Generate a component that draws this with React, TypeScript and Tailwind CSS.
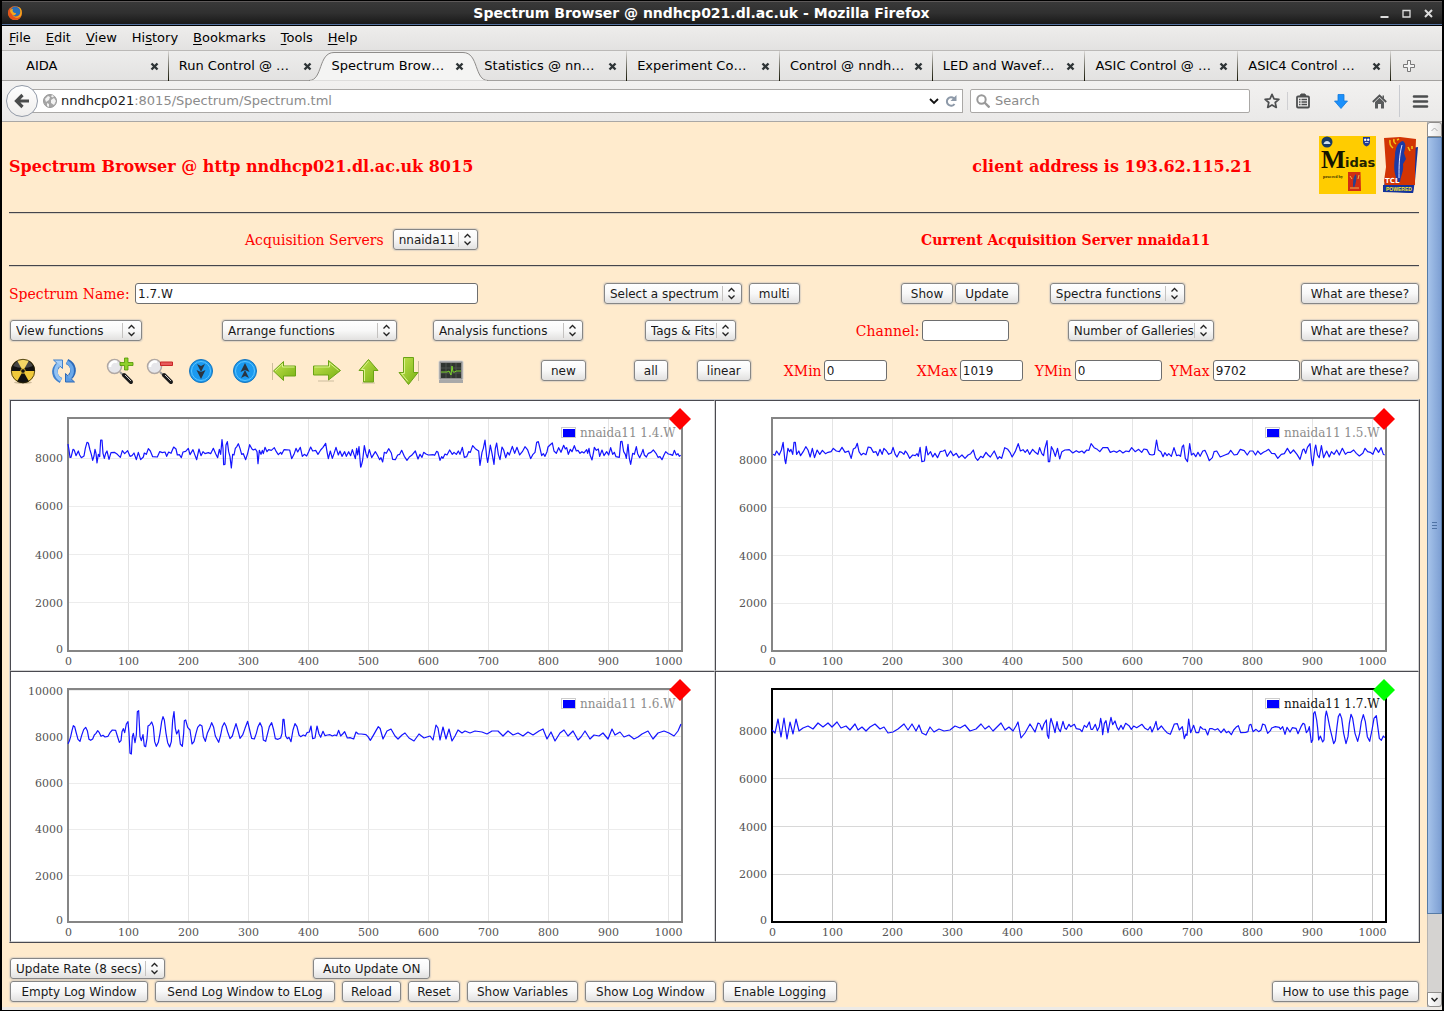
import React from "react";

/* ---------- form controls ---------- */

const shell =
  "h-[21px] rounded-[3px] border border-[#868686] bg-linear-to-b from-white via-[#f8f8f8] to-[#e2e1e0] font-['DejaVu_Sans',sans-serif] text-xs leading-4 text-[#1a1a1a] shadow-[0_0_1px_1px_rgba(150,160,180,0.3)]";

function Btn({ children, width = "px-[9px]" }: { children: React.ReactNode; width?: string }) {
  return <button className={`${shell} shrink-0 whitespace-nowrap ${width}`}>{children}</button>;
}

function Pick({ label, width, id }: { label: string; width: string; id?: string }) {
  return (
    <span className={`relative inline-block h-[21px] shrink-0 ${width}`}>
      <select id={id} aria-label={id ? undefined : label} className={`${shell} block w-full appearance-none pl-[5px]`}>
        <option>{label}</option>
      </select>
      <svg className="pointer-events-none absolute top-0 right-0" width="21" height="21" viewBox="0 0 21 21" fill="none">
        <path d="M1.5 3v15" stroke="#c4c2c0" />
        <path d="M7.5 8.5l3-3 3 3M7.5 12.5l3 3 3-3" stroke="#222" strokeWidth="1.3" />
      </svg>
    </span>
  );
}

function Field({ id, label, value, width, labelWidth }: { id: string; label: string; value: string; width: string; labelWidth: string }) {
  return (
    <div className="flex items-center">
      <label htmlFor={id} className={`shrink-0 whitespace-nowrap ${labelWidth}`}>{label}</label>
      <input
        id={id}
        defaultValue={value}
        className={`h-[21px] rounded-[3px] border border-[#6e6e6e] bg-white pl-[2px] font-['DejaVu_Sans',sans-serif] text-xs text-[#1a1a1a] ${width}`}
      />
    </div>
  );
}

/* ---------- toolbar icons ---------- */

function Zoomer({ plus }: { plus: boolean }) {
  return (
    <svg width="28" height="28" viewBox="0 0 28 28" fill="none">
      <path d="M14 15l4 4" stroke="#999" strokeWidth="2" />
      <path d="M18 18l7 7" stroke="#1c1c1c" strokeWidth="4" strokeLinecap="round" />
      <path d="M19 18l6 6" stroke="#c8c8c8" strokeWidth="1" />
      <circle cx="8.500" cy="9.500" r="7" fill="#e6e6ea" stroke="#b0a8a4" strokeWidth="1.500" />
      <path d="M4 10a5 5 0 0 1 7-5" stroke="#fff" strokeWidth="2.500" />
      {plus ? (
        <path d="M18.500 1h3.500v4.500h5v3h-5V13h-3.500V8.500H14v-3h4.500z" fill="#8fd02a" stroke="#4f9403" strokeWidth=".8" />
      ) : (
        <path d="M14.500 5h12v3.500h-12z" fill="#e65a5a" stroke="#c92626" />
      )}
    </svg>
  );
}

function Disc({ up }: { up: boolean }) {
  return (
    <svg width="28" height="28" viewBox="0 0 28 28">
      <circle cx="14" cy="14" r="11.500" fill="#1b9af0" stroke="#1675bd" />
      <circle cx="14" cy="14" r="9.500" fill="none" stroke="#5cc4ff" />
      <g transform={up ? "rotate(180 14 14)" : undefined} fill="#2b3440">
        <path d="M10 7l4 2 4-2-4 8z" />
        <path d="M9.500 13l4.500 2 4.500-2L14 22z" />
      </g>
    </svg>
  );
}

const arrowArt = { fill: "url(#leaf)", stroke: "#6aa316", strokeLinejoin: "round" as const };

const icons: { name: string; art: React.ReactNode }[] = [
  {
    name: "Radiation",
    art: (
      <svg width="28" height="28" viewBox="0 0 28 28">
        <ellipse cx="14" cy="25.500" rx="9" ry="1.500" fill="#cdbb9c" />
        <circle cx="14" cy="14" r="12" fill="#f0c93a" />
        <g fill="#111">
          <path d="M14 14H2A12 12 0 0 1 8 3.600z" />
          <path d="M14 14h12a12 12 0 0 0-6-10.400z" />
          <path d="M14 14L8 24.400a12 12 0 0 0 12 0z" />
        </g>
        <path d="M4 9A11 11 0 0 1 24 9Q14 13 4 9z" fill="#fff" opacity=".22" />
        <circle cx="14" cy="14" r="11.700" fill="none" stroke="#2a2308" strokeWidth=".8" />
        <circle cx="14" cy="14" r="2.300" fill="#111" stroke="#f0c93a" strokeWidth=".8" />
      </svg>
    ),
  },
  {
    name: "Refresh",
    art: (
      <svg width="28" height="28" viewBox="0 0 28 28" strokeLinejoin="round">
        <g id="half-turn">
          <path d="M8 8C3 13 4 20 11 23.500" fill="none" stroke="#3f7fcb" strokeWidth="5.500" />
          <path d="M3.500 3h9v8.500z" fill="#a9d0f7" stroke="#3f7fcb" />
          <path d="M9 7C4 12 5 19.500 11 23" fill="none" stroke="#93c3f4" strokeWidth="3.500" />
        </g>
        <g transform="rotate(180 14 14)">
          <path d="M8 8C3 13 4 20 11 23.500" fill="none" stroke="#2c69b8" strokeWidth="5.500" />
          <path d="M3.500 3h9v8.500z" fill="#5b9be2" stroke="#2c69b8" />
          <path d="M9 7C4 12 5 19.500 11 23" fill="none" stroke="#6aa8ea" strokeWidth="3.500" />
        </g>
      </svg>
    ),
  },
  { name: "Zoom in", art: <Zoomer plus /> },
  { name: "Zoom out", art: <Zoomer plus={false} /> },
  { name: "Page down", art: <Disc up={false} /> },
  { name: "Page up", art: <Disc up /> },
  {
    name: "Left",
    art: (
      <svg width="28" height="28" viewBox="0 0 28 28">
        <path d="M1.500 6v17" stroke="#cdbd9f" />
        <path d="M2.500 14L12.500 4.500V9h12v10h-12v4.500z" {...arrowArt} />
        <path d="M4 14l7.500-7.200V10h12" fill="none" stroke="#dcf28e" />
      </svg>
    ),
  },
  {
    name: "Right",
    art: (
      <svg width="30" height="28" viewBox="0 0 30 28">
        <path d="M6 24h16" stroke="#cdbd9f" />
        <path d="M1.500 9h15V3.500L28.500 13.500l-12 9.500v-5h-15z" {...arrowArt} />
        <path d="M2.500 10h15V6l9 7.500" fill="none" stroke="#dcf28e" />
      </svg>
    ),
  },
  {
    name: "Up",
    art: (
      <svg width="28" height="28" viewBox="0 0 28 28">
        <path d="M7 26h13" stroke="#cdbd9f" />
        <path d="M13.500 2.500L23 13.500h-4.500v11.500h-10V13.500H4z" {...arrowArt} />
        <path d="M9.500 24V12.500H6.500l7-8.300" fill="none" stroke="#dcf28e" />
      </svg>
    ),
  },
  {
    name: "Down",
    art: (
      <svg width="28" height="30" viewBox="0 0 28 30">
        <path d="M22.500 5v20" stroke="#cdbd9f" />
        <path d="M7.500 1.500h10v15H22L12.500 28.500 3 16.500h4.500z" {...arrowArt} />
        <path d="M8.500 2.500v15H5.500l6.500 8" fill="none" stroke="#dcf28e" />
      </svg>
    ),
  },
  {
    name: "Monitor",
    art: (
      <svg width="26" height="26" viewBox="0 0 26 26">
        <rect x="1" y="3" width="24" height="19" rx="1" fill="#8d8d8d" stroke="#d2d2d2" />
        <rect x="3" y="5" width="20" height="15" fill="#303530" />
        <path d="M3 10h20M3 15h20M8 5v15M13 5v15M18 5v15" stroke="#4c524c" />
        <path d="M3 14h6l2-1 2 4 1-9 1 6h2l1-1h5" fill="none" stroke="#7bd32c" />
        <path d="M1 22h24v3H1z" fill="#a9a9a9" />
      </svg>
    ),
  },
];

/* ---------- spectra ---------- */

type Chart = {
  name: string;
  ox: number;
  oy: number;
  width: number;
  active: boolean;
  step: number;
  ticks: number[];
  traces: { place: string; points: string }[];
};

const w14a =
  "204,147 207,165 210,187 213,187 219,163 223,166 228,182 235,168 239,180 244,188 252,183 256,160 261,142 265,144 270,165 274,178 278,196 282,183 285,163 288,175 291,204 295,178 299,185 302,135 306,135 309,175 313,190 317,175 321,168 327,193 333,173 343,172 352,178 361,187 367,167 374,176 383,167 390,184 396,182 402,174 409,194 415,172 422,194 430,186 433,174 439,178 445,161 451,168 458,185 472,186 479,170 487,173 495,171 500,184 506,171 513,175 521,156 528,162 532,180 538,179 544,188 549,171 557,169 565,160 570,179 574,172 579,164 584,178 590,194 597,162 603,182 609,170 615,176 625,173 632,176 640,160 647,176 653,188 658,163 662,178 666,134 669,160 671,209 675,208 678,150 682,140 686,170 690,185 694,219 698,178 702,180 706,160 711,154 715,146 720,160 725,178 730,176 737,194 743,175 749,149 756,162 760,165 766,162 771,170 774,206 778,166 783,178 787,166 790,176 795,157 801,170 806,164 814,166 823,158 829,170 835,179 842,172 845,178 852,164 869,165 875,191 882,178 888,160 893,171 901,157 907,184 913,178 920,183 926,170 932,156 938,168 947,166 954,178 962,165 969,157 977,145 981,170 985,191 991,168 997,190 1002,176 1008,157 1015,180 1020,168 1026,184 1034,170 1039,184 1046,170 1052,182 1057,164 1062,179 1066,191 1070,160 1073,180 1077,155 1082,217";
const w14b =
  "32,217 35,208 38,195 43,152 48,176 52,188 58,164 65,188 71,178 76,170 82,180 89,194 93,188 98,201 103,172 109,175 116,161 124,174 128,193 136,194 143,180 149,178 155,166 163,184 171,196 178,186 185,181 196,168 204,192 210,178 216,187 221,172 228,177 235,180 250,179 254,181 260,169 264,172 270,196 275,185 279,190 285,177 291,180 299,165 307,178 312,172 319,178 325,168 330,178 337,157 343,187 350,185 356,170 361,172 368,152 376,161 386,168 390,211 396,172 400,160 405,135 410,185 413,202 418,172 421,150 426,175 432,208 436,160 440,144 445,178 450,194 456,156 461,165 467,188 473,172 478,180 487,154 494,175 501,157 509,180 517,170 525,155 533,165 542,191 549,178 555,172 560,142 565,140 570,160 575,182 580,176 585,184 591,170 594,156 600,150 607,144 612,168 619,175 626,158 633,172 641,151 646,162 650,158 655,178 661,163 666,170 673,152 679,168 684,166 690,175 696,170 702,174 710,164 713,175 717,160 720,180 726,195 730,175 733,157 739,166 745,162 749,184 756,165 762,182 770,170 776,180 782,158 788,178 793,172 798,185 808,187 812,140 816,139 821,170 826,178 829,190 834,148 838,190 842,208 848,175 853,178 859,155 863,176 869,188 875,175 879,163 883,180 889,186 895,175 903,172 910,165 918,175 924,187 930,185 936,194 942,180 947,170 955,177 961,178 968,181 973,166 979,180 984,176 988,184 992,181";
const w15 =
  "30,178 34,181 38,168 44,180 49,165 53,142 57,195 59,206 64,160 68,170 71,163 75,178 78,142 81,142 84,178 89,168 93,182 99,170 105,155 110,165 115,186 120,160 125,188 131,165 137,178 143,166 150,176 156,172 163,170 168,160 175,168 182,170 188,157 195,172 203,168 209,190 214,162 219,158 223,145 227,170 232,180 237,175 243,179 248,156 254,158 260,172 266,170 270,182 275,163 280,178 284,160 290,168 295,178 301,174 305,157 310,178 314,186 320,170 325,172 330,178 333,168 338,176 343,190 350,180 356,182 360,176 363,184 367,157 371,200 377,198 381,154 385,180 391,170 396,186 401,175 407,188 413,170 420,168 424,165 429,184 437,168 443,182 450,175 456,188 463,180 470,190 477,180 483,176 489,165 494,188 499,196 506,184 511,188 518,172 523,180 528,186 537,168 545,192 549,185 554,190 561,158 568,163 573,172 578,186 585,170 592,146 597,168 603,164 608,172 613,164 618,178 625,163 631,172 637,178 641,158 646,176 650,182 653,160 658,137 661,200 664,200 668,155 672,165 677,184 682,160 687,192 692,170 699,165 709,164 717,174 725,167 731,172 738,168 743,174 749,165 754,166 759,146 766,158 773,163 779,170 786,158 797,158 803,172 811,168 818,172 825,166 832,174 839,168 846,170 852,158 860,170 868,163 875,172 880,162 887,164 893,178 899,180 904,178 909,135 913,165 919,170 924,185 928,173 933,182 937,176 943,184 949,158 955,182 960,180 964,184 968,155 971,150 975,190 980,200 985,146 989,180 994,175 999,185 1004,172 1009,184 1015,168 1020,166 1025,180 1030,197 1037,188 1041,170 1047,168 1055,186 1066,180 1074,176 1079,166 1087,180 1094,178 1101,163 1110,167 1117,180 1123,168 1130,168 1136,180 1141,168 1148,178 1154,172 1160,168 1166,163 1173,175 1180,176 1187,190 1195,178 1202,176 1209,160 1216,175 1223,165 1231,178 1238,193 1244,165 1247,162 1251,175 1255,157 1261,146 1264,190 1267,212 1272,160 1274,150 1278,180 1282,188 1287,152 1292,188 1299,168 1305,186 1310,170 1316,178 1322,165 1328,180 1335,160 1342,178 1347,172 1354,172 1361,165 1367,175 1374,183 1382,175 1387,160 1393,170 1399,172 1405,178 1411,158 1418,172 1424,158 1429,178 1432,180";
const w16a =
  "204,221 208,213 212,200 216,182 220,167 224,170 228,186 234,208 240,214 245,196 251,179 257,172 262,182 267,208 272,211 278,207 283,195 288,190 293,182 298,188 303,199 309,196 315,201 324,199 330,188 337,180 347,181 352,198 358,217 363,212 366,185 370,176 374,188 379,162 384,155 387,190 390,250 394,252 397,200 400,190 405,218 409,195 412,125 416,122 420,200 424,212 429,194 433,228 437,230 441,205 444,168 449,165 455,156 460,170 464,215 469,229 475,217 480,190 485,155 489,140 493,150 498,190 503,218 509,231 514,215 518,150 522,125 526,175 530,192 536,180 541,222 547,229 551,190 553,152 557,150 563,172 570,180 576,222 582,215 588,190 593,172 600,164 606,168 610,200 616,214 622,190 629,175 635,158 641,172 646,198 656,217 662,195 667,170 673,158 678,168 683,186 690,206 697,198 702,180 708,161 714,182 720,205 728,195 735,175 743,154 749,180 755,205 763,207 769,190 774,170 780,158 786,172 790,210 797,214 803,190 808,170 815,158 821,180 826,206 834,208 842,204 846,190 849,148 852,148 857,198 862,206 867,202 873,215 879,180 885,161 891,170 897,195 902,200 910,195 916,198 921,188 928,186 933,168 938,206 945,204 951,168 957,192 962,202 969,184 975,197 983,195 990,194 997,198 1004,195 1010,197 1016,181 1022,198 1028,192 1034,185 1042,204 1050,203 1061,207 1068,186 1075,192 1084,192 1098,194 1104,200 1111,211 1120,196 1128,182 1135,170 1140,175";
const w16b =
  "380,728 383,739 387,731 391,729 395,736 398,739 402,735 405,733 409,738 414,741 419,734 424,738 430,736 433,740 436,725 438,728 440,740 443,727 446,739 449,729 452,741 455,736 458,730 462,733 465,731 470,733 475,731 482,732 487,734 492,731 498,731 503,736 508,731 513,735 518,733 523,736 528,732 533,735 539,731 543,729 547,739 551,732 555,741 560,733 564,730 568,736 573,731 578,740 581,737 585,731 590,739 594,735 599,736 603,733 608,739 612,729 615,735 620,732 624,737 629,735 634,739 638,737 642,734 648,731 653,739 658,733 664,731 669,733 674,736 678,731 681,724";
const w17a =
  "772,730 775,733 778,719 781,737 784,718 787,739 790,722 793,734 796,719 799,731 803,728 808,726 813,729 818,723 823,727 828,723 832,727 837,722 841,728 846,726 850,730 855,724 858,730 862,727 866,731 870,727 875,724 880,729 884,727 888,733 893,732 898,729 904,724 908,730 912,724 916,731 919,725 922,733 926,735 930,727 934,732 939,729 944,731 950,730 955,726 960,728 965,725 970,731 976,729 981,724 985,729 989,726 993,731 997,727 1001,723 1005,730 1009,727 1013,731 1016,726 1018,722 1021,738 1025,733 1030,724 1035,732 1038,723 1040,724";
const w17b =
  "0,163 6,180 12,162 19,150 22,195 26,205 30,160 33,145 40,168 45,188 51,155 55,175 61,185 69,154 75,175 79,178 87,163 92,170 103,163 109,176 120,178 126,185 133,166 140,172 148,156 153,178 158,178 166,163 172,182 178,170 182,145 185,160 188,194 193,160 198,152 204,188 209,160 213,142 218,164 225,153 231,172 236,180 243,166 249,178 257,160 267,167 274,178 281,168 290,173 306,163 315,175 324,180 331,170 336,186 343,170 348,154 353,180 364,168 372,178 381,188 391,193 397,178 403,162 412,161 418,180 427,170 433,206 438,192 441,196 446,147 452,188 461,166 468,188 476,188 481,170 488,177 496,178 503,195 509,176 517,176 525,180 533,176 543,188 552,177 559,188 566,184 574,194 581,180 590,170 595,167 602,188 617,187 624,185 628,165 633,163 639,185 648,178 656,185 663,180 668,162 675,165 683,190 691,182 695,174 706,170 718,172 721,178 728,170 735,193 741,172 750,186 757,173 768,175 774,191 783,170 789,160 794,163 799,188 804,182 808,170 814,217 818,210 821,130 825,125 830,150 833,175 836,210 841,198 848,216 852,210 856,140 859,123 863,140 870,175 876,200 881,221 886,212 891,170 895,140 900,131 905,145 911,190 918,221 924,200 928,160 933,133 938,145 945,190 953,214 959,190 964,155 970,134 976,155 982,200 989,214 996,180 1002,145 1009,137 1014,175 1018,205 1024,211 1030,198 1034,203";

const charts: Chart[] = [
  {
    name: "nnaida11 1.4.W", ox: 11, oy: 401, width: 703, active: false, step: 48.25, ticks: [0, 2000, 4000, 6000, 8000],
    traces: [
      { place: "translate(0 395) scale(.33333)", points: w14a },
      { place: "translate(350 395) scale(.33333)", points: w14b },
    ],
  },
  {
    name: "nnaida11 1.5.W", ox: 716, oy: 401, width: 702, active: false, step: 47.75, ticks: [0, 2000, 4000, 6000, 8000],
    traces: [{ place: "translate(760 395) scale(.43622 .33333)", points: w15 }],
  },
  {
    name: "nnaida11 1.6.W", ox: 11, oy: 672, width: 703, active: false, step: 46.26, ticks: [0, 2000, 4000, 6000, 8000, 10000],
    traces: [
      { place: "translate(0 670) scale(.33333)", points: w16a },
      { place: "translate(0 0)", points: w16b },
    ],
  },
  {
    name: "nnaida11 1.7.W", ox: 716, oy: 672, width: 702, active: true, step: 47.75, ticks: [0, 2000, 4000, 6000, 8000],
    traces: [
      { place: "translate(0 0)", points: w17a },
      { place: "translate(1040 670) scale(.33333)", points: w17b },
    ],
  },
];

const hundreds = [0, 100, 200, 300, 400, 500, 600, 700, 800, 900, 1000];

/* Every plot shares one gallery-wide coordinate space; each view box shows its own quarter. */
function Spectrum({ c }: { c: Chart }) {
  const left = c.ox < 700 ? 68 : 772;
  const top = c.oy + 17;
  const base = top + 233;
  const right = left + 614;
  const grid = c.active ? "#c6c6c6" : "#e4e4e4";
  return (
    <div className="border border-t-[#4a4a50] border-r-[#d4d4d4] border-b-[#d4d4d4] border-l-[#4a4a50] bg-white">
      <svg
        className="block h-auto w-full font-['DejaVu_Serif',serif] text-[11px]"
        viewBox={`${c.ox} ${c.oy} ${c.width} 269`}
        role="img"
        aria-label={c.name}
      >
        {hundreds.slice(1).map((v) => (
          <path key={v} d={`M${Math.round(left + v * 0.6) + 0.5} ${top}V${base}`} stroke={grid} />
        ))}
        {c.ticks.slice(1).map((v) => (
          <path key={v} d={`M${left} ${Math.floor(base - (v / 2000) * c.step) + 0.5}H${right}`} stroke={c.active ? "#d8d8d8" : "#ececec"} />
        ))}
        <rect x={left} y={top} width="614" height="233" fill="none" stroke={c.active ? "#000" : "#858585"} strokeWidth="2" />
        {c.traces.map((t) => (
          <polyline
            key={t.place}
            transform={t.place}
            points={t.points}
            fill="none"
            stroke="#1414ff"
            strokeWidth="1.2"
            vectorEffect="non-scaling-stroke"
            strokeLinejoin="round"
          />
        ))}
        <g fill="#545454">
          {hundreds.map((v) => (
            <text key={v} x={left + v * 0.6 + 0.5} y={base + 14} textAnchor="middle">{v}</text>
          ))}
          {c.ticks.map((v) => (
            <text key={v} x={left - 5} y={base + (v === 0 ? 2 : 4) - (v / 2000) * c.step} textAnchor="end">{v}</text>
          ))}
        </g>
        <rect x={left + 493.5} y={top + 9.5} width="14" height="10" fill="#fff" stroke="#ccc" />
        <rect x={left + 495} y={top + 11} width="12" height="8" fill="#00f" />
        <text x={left + 512} y={top + 19} className="text-xs" fill={c.active ? "#111" : "#8c8c8c"}>{c.name}</text>
        <path d={`M${right - 2} ${top - 10}l11 11-11 11-11-11z`} fill={c.active ? "#0f0" : "#f00"} />
      </svg>
    </div>
  );
}

/* ---------- browser chrome ---------- */

const menus: [string, string, string][] = [
  ["", "F", "ile"], ["", "E", "dit"], ["", "V", "iew"], ["Hi", "s", "tory"], ["", "B", "ookmarks"], ["", "T", "ools"], ["", "H", "elp"],
];

const tabs = [
  "AIDA", "Run Control @ …", "Spectrum Brow…", "Statistics @ nn…", "Experiment Co…", "Control @ nndh…", "LED and Wavef…", "ASIC Control @ …", "ASIC4 Control …",
];

function TabStrip() {
  return (
    <div role="tablist" className="flex h-[30px] border-b border-[#a3a19f] bg-linear-to-b from-[#ededec] to-[#e3e2e1] pl-[14px]">
      {tabs.map((t, i) => (
        <div key={t} className="relative flex min-w-0 flex-1 items-center pr-[9px] pl-[10px]">
          {i === 2 && (
            <svg className="absolute top-0 -left-[13px]" width="179" height="30" viewBox="0 0 179 30">
              <path d="M0 29.500C14 29.500 9 1.500 25 1.500H154C170 1.500 165 29.500 179 29.500" fill="#f4f4f3" stroke="#8e8c8a" />
              <path d="M1 30h177" stroke="#f1f0ef" strokeWidth="1" />
            </svg>
          )}
          {i !== 1 && i !== 2 && (
            <span className="absolute top-0 right-0 h-[30px] w-px bg-linear-to-b from-[#dcdad8] to-[#151505]" />
          )}
          <button role="tab" aria-selected={i === 2} className="relative grow truncate text-left text-[13px] leading-5">{t}</button>
          <button aria-label={`Close ${t}`} className="relative shrink-0 pt-[2px] pr-px">
            <svg width="9" height="9" viewBox="0 0 9 9">
              <path d="M1.500 1.500l6 6M7.500 1.500l-6 6" stroke="#2e3436" strokeWidth="2.400" />
            </svg>
          </button>
        </div>
      ))}
      <button aria-label="New tab" className="flex w-[51px] items-center pl-[11px]">
        <svg width="14" height="14" viewBox="0 0 14 14">
          <path d="M5.500 1.500h3v4h4v3h-4v4h-3v-4h-4v-3h4z" fill="#f4f4f4" stroke="#777" />
        </svg>
      </button>
    </div>
  );
}

function NavBar() {
  return (
    <div className="flex h-[41px] items-center border-b border-[#a9a7a5] bg-linear-to-b from-[#f2f1f0] to-[#eae9e8] pl-1 text-[13px]">
      <button aria-label="Back" className="z-10 flex size-8 shrink-0 items-center justify-center rounded-full border border-[#929aa8] bg-linear-to-b from-white to-[#efeeed]">
        <svg width="16" height="16" viewBox="0 0 16 16" fill="none" stroke="#4a4c4c" strokeWidth="3.200">
          <path d="M15 8H3M8.500 2L2.500 8l6 6" />
        </svg>
      </button>
      <div className="-ml-2 flex h-6 min-w-0 grow items-center border border-[#aaa8a6] bg-white pr-[5px] pl-3">
        <svg className="mr-1 shrink-0" width="14" height="14" viewBox="0 0 14 14">
          <circle cx="7" cy="7" r="6.500" fill="#a5a5a5" stroke="#999" />
          <path d="M2 5l3-3 2 1-1 3-3 2zM8 6l3-2 2 3-2 4-3-2zM4 9l2 1v3l-2-1zM9 1l2 1-1 1.500-2-1z" fill="#f2f2f2" />
        </svg>
        <label htmlFor="address" className="text-[#222]">nndhcp021</label>
        <input id="address" defaultValue=":8015/Spectrum/Spectrum.tml" className="min-w-0 grow text-[#8b8b8b] outline-none" />
        <button aria-label="History list" className="mr-[6px]">
          <svg width="10" height="7" viewBox="0 0 10 7" fill="none"><path d="M1 1l4 4 4-4" stroke="#111" strokeWidth="1.800" /></svg>
        </button>
        <button aria-label="Reload page">
          <svg width="12" height="12" viewBox="0 0 12 12" fill="none">
            <path d="M9 3.500A4.200 4.200 0 1 0 9.500 9" stroke="#8d99a8" strokeWidth="2" />
            <path d="M11.500 0v6h-6z" fill="#8d99a8" />
          </svg>
        </button>
      </div>
      <div className="ml-[7px] flex h-6 w-[280px] shrink-0 items-center rounded-[2px] border border-[#aaa8a6] bg-white pl-[5px]">
        <svg className="mr-[5px]" width="14" height="14" viewBox="0 0 14 14" fill="none" stroke="#999">
          <circle cx="5.500" cy="5.500" r="4.200" strokeWidth="2" />
          <path d="M8.500 8.500l5 5" strokeWidth="2.400" />
        </svg>
        <input aria-label="Search" placeholder="Search" className="min-w-0 grow outline-none placeholder:text-[#8b8b8b]" />
      </div>
      <button aria-label="Bookmark" className="ml-[14px] shrink-0">
        <svg width="16" height="16" viewBox="0 0 16 16" fill="none" stroke="#4c4e4f" strokeWidth="1.700" strokeLinejoin="round">
          <path d="M8 1.300l2 4.500 4.900.5-3.700 3.200 1.100 4.900L8 11.900l-4.300 2.500 1.100-4.900L1.100 6.300 6 5.800z" />
        </svg>
      </button>
      <span className="mr-2 ml-[7px] h-[18px] w-px bg-[#cfcfd2]" />
      <button aria-label="Bookmarks menu" className="shrink-0">
        <svg width="14" height="16" viewBox="0 0 14 16" fill="none" stroke="#4c4e4f">
          <rect x="1" y="3.500" width="12" height="11" rx="1" strokeWidth="1.800" />
          <path d="M4 3l1-2h4l1 2z" fill="#4c4e4f" />
          <path d="M3 6.500h1.500M3 9h1.500M3 11.500h1.500M5.500 6.500H11M5.500 9H11M5.500 11.500H11" strokeWidth="1.300" />
        </svg>
      </button>
      <button aria-label="Downloads" className="ml-6 shrink-0">
        <svg width="14" height="15" viewBox="0 0 14 15"><path d="M4 .5h6V7h3.500L7 14.500.500 7H4z" fill="#1b90fb" stroke="#1379da" strokeWidth=".8" /></svg>
      </button>
      <button aria-label="Home" className="ml-6 shrink-0">
        <svg width="15" height="15" viewBox="0 0 15 15">
          <path d="M.8 8l6.700-6.500L14.200 8" fill="none" stroke="#525455" strokeWidth="1.800" />
          <path d="M3 8l4.500-4.300L12 8v6.500H9V10H6v4.500H3zM10.500 1.500H12V5l-1.500-1.500z" fill="#5a5c5d" />
        </svg>
      </button>
      <span className="mx-3 h-8 w-px bg-[#c9cbd0]" />
      <button aria-label="Menu" className="mr-[13px] shrink-0">
        <svg width="17" height="13" viewBox="0 0 17 13"><path d="M2 1.500h13M2 6.500h13M2 11.500h13" stroke="#4c4e4f" strokeWidth="2.600" strokeLinecap="round" /></svg>
      </button>
    </div>
  );
}

function Logos() {
  return (
    <div className="flex items-center gap-[6px] pb-1 pl-px">
      <svg width="57" height="58" viewBox="0 0 57 58" role="img" aria-label="Midas">
        <path d="M0 0h57v58H0z" fill="#fc0" />
        <circle cx="8" cy="6" r="5.500" fill="#173a66" />
        <path d="M4.500 8c1-4 6-4 7 0z" fill="#cfe0ee" />
        <path d="M44 1h7v5q0 3-3.500 4.500Q44 9 44 6z" fill="#223c92" />
        <path d="M45.500 3h1.500v1.500h-1.500zM48.500 3H50v1.500h-1.500zM46 6.500h3.500" fill="#fff" stroke="#fff" strokeWidth=".7" />
        <text x="2" y="32" fontSize="26" fontWeight="700" fontFamily="Liberation Serif, serif" fill="#141400">M</text>
        <text x="26" y="31" fontSize="13" fontWeight="700" fontFamily="DejaVu Sans, sans-serif" fill="#222200">idas</text>
        <text x="4" y="42" fontSize="4" fontWeight="700" fontFamily="Liberation Serif, serif" fill="#332d00">powered by</text>
        <path d="M29 36h12.500l.5 19H29z" fill="#d12d12" />
        <path d="M34 50c0-5 0-9 3-12 1 4 0 9-2 14z" fill="#27418f" />
        <path d="M31 40l2 3M40 39l-1 4M31 52h9" stroke="#efb54a" />
      </svg>
      <svg width="37" height="58" viewBox="0 0 37 58" role="img" aria-label="Tcl powered">
        <path d="M30 12l6-1-3 34-2 12-30-2 3-15z" fill="#12339c" />
        <path d="M2 2l16-1 16 2-1 28v18H3L2 45l2-14z" fill="#d23404" />
        <path d="M16 46c-5-10-4-17-3-26 0-8 3-14 8-15 4 3 2 8 1 12l2 6-3 5c1 7-2 11-3 18z" fill="#1b3aa6" />
        <path d="M17 42c0-12 0-22 3-33" stroke="#dfe3ff" fill="none" />
        <path d="M8 4q-1 5 3 8M12 3q-1 3 2 5M26 11l2 4M30 10v3M15 4l2-1" stroke="#f2c218" strokeWidth="1.500" fill="none" />
        <text x="3" y="47" fontSize="7" fontFamily="DejaVu Sans, sans-serif" fill="#fff">TCL</text>
        <path d="M1 49h31l-1 8-30-1z" fill="#12339c" />
        <text x="4" y="55" fontSize="5" fontWeight="700" fontFamily="Liberation Sans, sans-serif" fill="#ffe92e">POWERED</text>
      </svg>
    </div>
  );
}

function ScrollBar() {
  return (
    <div aria-hidden className="flex w-[15px] shrink-0 flex-col bg-[#d5d3d1] shadow-[inset_1px_0_#b5b3b1]">
      <span className="flex h-[15px] items-center justify-center rounded-t-[3px] border border-[#8e8c8a] bg-linear-to-r from-white to-[#e4e3e2]">
        <svg width="7" height="5" viewBox="0 0 7 5" fill="none"><path d="M.5 4l3-3 3 3" stroke="#aaa" /></svg>
      </span>
      <span className="flex grow-[776] flex-col items-center justify-center gap-[2px] border border-[#557aa6] bg-linear-to-r from-[#a6c3ea] to-[#7d9fd3]">
        <i className="h-px w-[5px] bg-[#4f73a5]" />
        <i className="h-px w-[5px] bg-[#4f73a5]" />
        <i className="h-px w-[5px] bg-[#4f73a5]" />
      </span>
      <span className="grow-[79]" />
      <span className="flex h-[15px] items-center justify-center rounded-b-[3px] border border-[#8e8c8a] bg-linear-to-r from-white to-[#e4e3e2]">
        <svg width="7" height="5" viewBox="0 0 7 5" fill="none"><path d="M.5 1l3 3 3-3" stroke="#222" strokeWidth="1.500" /></svg>
      </span>
    </div>
  );
}

const rule = "h-[2px] border-t border-b border-t-[#45454b] border-b-[#dcd0bd]";

export default function App() {
  return (
    <div className="flex min-h-screen flex-col border-x-2 border-b border-black bg-[#edeae6] font-['DejaVu_Sans',sans-serif] text-black">
      <svg className="absolute size-0" aria-hidden>
        <linearGradient id="leaf" x1="0" y1="0" x2="1" y2="1">
          <stop offset="0" stopColor="#c4e350" />
          <stop offset="1" stopColor="#76b012" />
        </linearGradient>
      </svg>

      <header className="flex h-[26px] items-center border-t border-b border-black bg-linear-to-b from-[#3a3a3a] via-[#303030] to-[#171717] px-[5px] shadow-[inset_0_1px_#5e5a5a,inset_0_-1px_#5673a0]">
        <svg width="16" height="16" viewBox="0 0 16 16">
          <circle cx="8" cy="8" r="7" fill="#e8691b" />
          <circle cx="8.500" cy="6.500" r="5" fill="#2b6fb5" />
          <path d="M10 2c3 1 4 4 3 7s-5 4-8 1c2 1 4 0 4-2-3 0-4-2-3-4-2 0-4 1-4.500 4C2 13 6 15 9 15c5-1 7-7 5-11-1-2-3-2-4-2z" fill="#f5a81c" />
          <path d="M1.500 5C0 10 3 15 8 15c3 0 5-1 6-4-3 3-8 2-9-2C3 8 3 5 3 3z" fill="#e2521a" />
        </svg>
        <h1 className="grow text-center text-sm font-bold text-white">Spectrum Browser @ nndhcp021.dl.ac.uk - Mozilla Firefox</h1>
        <div className="flex items-center gap-[13px] pr-1">
          <button aria-label="Minimise"><svg width="9" height="9" viewBox="0 0 9 9"><path d="M.5 8h8" stroke="#ddd" strokeWidth="2" /></svg></button>
          <button aria-label="Maximise"><svg width="9" height="9" viewBox="0 0 9 9"><path d="M1 1.500h7V8H1z" fill="none" stroke="#ddd" strokeWidth="1.300" /></svg></button>
          <button aria-label="Close"><svg width="9" height="9" viewBox="0 0 9 9"><path d="M1 1l7 7M8 1L1 8" stroke="#ddd" strokeWidth="2" /></svg></button>
        </div>
      </header>

      <nav className="flex h-[25px] items-center gap-[15px] border-b border-[#bbb9b7] bg-linear-to-b from-[#eeedec] to-[#e3e2e1] pl-[7px] text-[13px] leading-5">
        {menus.map(([a, b, c]) => (
          <button key={b + c}>{a}<span className="underline underline-offset-2">{b}</span>{c}</button>
        ))}
      </nav>
      <TabStrip />
      <NavBar />

      <div className="mb-[3px] flex grow bg-[#ffebcd]">
        <main className="min-w-0 grow pr-2 pl-[7px] font-['DejaVu_Serif',serif] text-sm text-[#f00]">
          <div className="grid h-[90px] grid-cols-[964fr_346fr_100fr] items-center text-base font-bold">
            <h2>Spectrum Browser @ http nndhcp021.dl.ac.uk 8015</h2>
            <p>client address is 193.62.115.21</p>
            <Logos />
          </div>
          <div className={rule} />
          <div className="grid h-[51px] grid-cols-[236fr_676fr_498fr] items-center">
            <span />
            <div className="flex items-center gap-[9px]">
              <label htmlFor="server">Acquisition Servers</label>
              <Pick id="server" label="nnaida11" width="w-[85px]" />
            </div>
            <strong>Current Acquisition Server nnaida11</strong>
          </div>
          <div className={rule} />

          <div className="mt-2 grid h-[37px] grid-cols-[595fr_145fr_152fr_149fr_251fr_118fr] items-center">
            <Field id="name" label="Spectrum Name:" value="1.7.W" width="w-[343px]" labelWidth="w-[126px]" />
            <Pick label="Select a spectrum" width="w-[138px]" />
            <div><Btn>multi</Btn></div>
            <div className="flex gap-[2px]"><Btn>Show</Btn><Btn>Update</Btn></div>
            <Pick label="Spectra functions" width="w-[135px]" />
            <Btn>What are these?</Btn>
          </div>
          <div className="grid h-[37px] grid-cols-[212fr_211fr_212fr_211fr_212fr_233fr_118fr] items-center pl-px">
            <Pick label="View functions" width="w-[132px]" />
            <Pick label="Arrange functions" width="w-[175px]" />
            <Pick label="Analysis functions" width="w-[150px]" />
            <Pick label="Tags & Fits" width="w-[91px]" />
            <Field id="channel" label="Channel:" value="" width="w-[87px]" labelWidth="w-[66px]" />
            <Pick label="Number of Galleries" width="w-[146px]" />
            <Btn>What are these?</Btn>
          </div>
          <div className="grid h-[43px] grid-cols-[532fr_93fr_63fr_87fr_133fr_118fr_135fr_131fr_118fr] items-center">
            <div className="grid grid-cols-[41fr_56fr_40fr_41fr_44fr_40fr_41fr_43fr_41fr_42fr_103fr] items-center">
              {icons.map((i) => (
                <button key={i.name} aria-label={i.name} className="w-7">{i.art}</button>
              ))}
            </div>
            <div><Btn>new</Btn></div>
            <div><Btn>all</Btn></div>
            <div><Btn>linear</Btn></div>
            <Field id="xmin" label="XMin" value="0" width="w-[63px]" labelWidth="w-[40px]" />
            <Field id="xmax" label="XMax" value="1019" width="w-[63px]" labelWidth="w-[43px]" />
            <Field id="ymin" label="YMin" value="0" width="w-[87px]" labelWidth="w-[40px]" />
            <Field id="ymax" label="YMax" value="9702" width="w-[87px]" labelWidth="w-[43px]" />
            <Btn>What are these?</Btn>
          </div>

          <section className="mt-[7px] -mr-px grid grid-cols-[705fr_704fr] border border-t-[#cfcfcf] border-r-[#4a4a50] border-b-[#4a4a50] border-l-[#cfcfcf]">
            {charts.map((c) => (
              <Spectrum key={c.name} c={c} />
            ))}
          </section>

          <div className="mt-[15px] grid grid-cols-[303fr_1106fr] pl-px">
            <Pick label="Update Rate (8 secs)" width="w-[155px]" />
            <div className="flex"><Btn>Auto Update ON</Btn></div>
          </div>
          <div className="mt-[2px] mb-[5px] flex gap-[7px] pl-px">
            <Btn width="w-[138px]">Empty Log Window</Btn>
            <Btn width="w-[180px]">Send Log Window to ELog</Btn>
            <Btn width="w-[59px]">Reload</Btn>
            <Btn width="w-[52px]">Reset</Btn>
            <Btn width="w-[111px]">Show Variables</Btn>
            <Btn width="w-[131px]">Show Log Window</Btn>
            <Btn width="w-[114px]">Enable Logging</Btn>
            <span className="grow" />
            <Btn>How to use this page</Btn>
          </div>
        </main>
        <ScrollBar />
      </div>
    </div>
  );
}
